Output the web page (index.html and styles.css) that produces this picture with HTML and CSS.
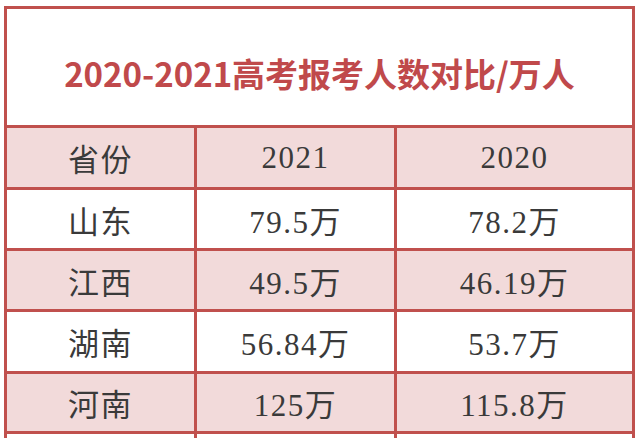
FILE: index.html
```html
<!DOCTYPE html>
<html lang="zh-CN">
<head>
<meta charset="utf-8">
<title>2020-2021高考报考人数对比</title>
<link rel="stylesheet" href="styles.css">
</head>
<body>
<div class="sheet">
  <div class="cell title">2020-2021高考报考人数对比/万人</div>
  <div class="cell pink">省份</div>
  <div class="cell pink num">2021</div>
  <div class="cell pink num">2020</div>
  <div class="cell">山东</div>
  <div class="cell num">79.5万</div>
  <div class="cell num">78.2万</div>
  <div class="cell pink">江西</div>
  <div class="cell pink num">49.5万</div>
  <div class="cell pink num">46.19万</div>
  <div class="cell">湖南</div>
  <div class="cell num">56.84万</div>
  <div class="cell num">53.7万</div>
  <div class="cell pink">河南</div>
  <div class="cell pink num">125万</div>
  <div class="cell pink num">115.8万</div>
  <div class="cell"></div>
  <div class="cell"></div>
  <div class="cell"></div>
</div>
</body>
</html>
```

FILE: styles.css
```css
html, body {
  margin: 0;
  padding: 0;
  background: #ffffff;
  overflow: hidden;
}

body {
  width: 640px;
  height: 438px;
}

.sheet {
  margin: 6px 0 0 4px;
  width: 631px;
  box-sizing: border-box;
  padding: 3px;
  display: grid;
  grid-template-columns: 187px 197px 235px;
  grid-template-rows: 116px 59px 58px 58px 59px 57px 58px;
  column-gap: 3px;
  row-gap: 3px;
  background: #c0504d;
}

.cell {
  background: #ffffff;
  display: flex;
  align-items: center;
  justify-content: center;
  font-family: "Liberation Serif", "Noto Sans CJK SC", serif;
  font-size: 31px;
  color: #3a3a3a;
  letter-spacing: 1.5px;
}

.pink {
  background: #f2dada;
}

.title {
  grid-column: 1 / 4;
  padding-top: 12px;
  box-sizing: border-box;
  font-family: "Noto Sans CJK SC", sans-serif;
  font-weight: 700;
  font-size: 33px;
  letter-spacing: 0;
  color: #c0494b;
}
```
